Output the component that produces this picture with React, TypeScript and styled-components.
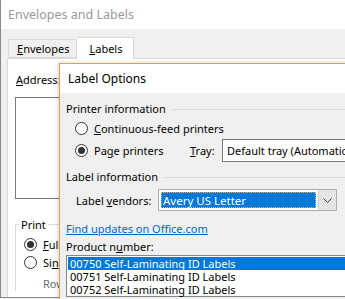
import React from "react";
import styled, { createGlobalStyle } from "styled-components";

const GlobalStyle = createGlobalStyle`
  html, body {
    margin: 0;
    padding: 0;
    background: #f0f0f0;
    overflow: hidden;
  }
  body {
    font-family: "Noto Sans", "Segoe UI", "Liberation Sans", sans-serif;
    font-size: 11px;
    color: #000;
  }
`;

const Desktop = styled.div`
  position: relative;
  width: 345px;
  height: 299px;
  overflow: hidden;
  background: #f0f0f0;
`;

const Window = styled.div`
  position: absolute;
  left: 0;
  top: 0;
  width: 420px;
  height: 298px;
  border-left: 1px solid #8a8a8a;
  border-bottom: 1px solid #8a8a8a;
  background: #f0f0f0;
  display: flex;
  flex-direction: column;
  box-sizing: border-box;
`;

const TitleBar = styled.div<{ $active?: boolean }>`
  height: 29px;
  flex: none;
  background: #fff;
  display: flex;
  align-items: center;
  padding-left: ${(p) => (p.$active ? 8 : 7)}px;
  font-size: ${(p) => (p.$active ? 12 : 12.5)}px;
  color: ${(p) => (p.$active ? "#000" : "#9a9a9a")};
`;

const TabStrip = styled.div`
  display: flex;
  align-items: flex-end;
  height: 29px;
  padding: 7px 0 0 7px;
  box-sizing: border-box;
  flex: none;
`;

const Tab = styled.div<{ $selected?: boolean }>`
  height: ${(p) => (p.$selected ? 22 : 19)}px;
  padding: 0 ${(p) => (p.$selected ? 11 : 7)}px 0 ${(p) => (p.$selected ? 12 : 8)}px;
  display: flex;
  align-items: center;
  box-sizing: border-box;
  border: 1px solid #d9d9d9;
  border-bottom: ${(p) => (p.$selected ? "none" : "1px solid #d9d9d9")};
  background: ${(p) => (p.$selected ? "#fff" : "#f0f0f0")};
  margin-bottom: ${(p) => (p.$selected ? -1 : 0)}px;
  position: relative;
  z-index: ${(p) => (p.$selected ? 1 : 0)};
  & + & {
    border-left: none;
  }
`;

const TabPanel = styled.div`
  margin-left: 6px;
  flex: 1;
  background: #fff;
  border: 1px solid #d9d9d9;
  border-bottom: none;
  padding: 13px 0 0 8px;
  display: flex;
  flex-direction: column;
`;

const FieldLabel = styled.div`
  line-height: 15px;
  white-space: nowrap;
`;

const AddressBox = styled.div`
  margin-top: 10px;
  margin-left: -1px;
  height: 100px;
  width: 300px;
  border: 1px solid #7a7a7a;
  background: #fff;
`;

const GroupBox = styled.fieldset`
  margin: 18px 0 0 -1px;
  padding: 3px 0 0 8px;
  border: 1px solid #dcdcdc;
  border-bottom: none;
  width: 300px;
  min-width: 0;
  display: flex;
  flex-direction: column;
`;

const Legend = styled.legend`
  padding: 0 2px;
  margin-left: -5px;
  line-height: 15px;
`;

const RadioRow = styled.label<{ $height?: number }>`
  display: flex;
  align-items: center;
  height: ${(p) => p.$height ?? 18}px;
  gap: 6px;
  white-space: nowrap;
`;

const RadioCircle = styled.span<{ $checked?: boolean }>`
  width: 13px;
  height: 13px;
  border: 1px solid #333;
  border-radius: 50%;
  box-sizing: border-box;
  background: #fff;
  flex: none;
  display: flex;
  align-items: center;
  justify-content: center;
  &::after {
    content: "";
    width: 7px;
    height: 7px;
    border-radius: 50%;
    background: ${(p) => (p.$checked ? "#333" : "transparent")};
  }
`;

const GrayText = styled.div`
  color: #6d6d6d;
  padding-left: 19px;
  margin-top: 5px;
  line-height: 15px;
`;

const Dialog = styled.div`
  position: absolute;
  left: 59px;
  top: 63px;
  width: 330px;
  height: 250px;
  border: 1px solid #dba25a;
  background: #f0f0f0;
  box-shadow: -1px 0 4px rgba(0, 0, 0, 0.18);
  display: flex;
  flex-direction: column;
`;

const DialogBody = styled.div`
  padding: 8px 0 0 6px;
  display: flex;
  flex-direction: column;
  overflow: hidden;
`;

const SectionHeading = styled.div<{ $top?: number }>`
  display: flex;
  align-items: center;
  gap: 6px;
  line-height: 15px;
  margin-top: ${(p) => p.$top ?? 0}px;
  white-space: nowrap;
  &::after {
    content: "";
    flex: 1;
    height: 1px;
    background: #dcdcdc;
    margin-top: 1px;
  }
`;

const Indented = styled.div`
  padding-left: 9px;
  margin-top: 1px;
  display: flex;
  flex-direction: column;
`;

const PrinterRow = styled.div`
  display: flex;
  align-items: center;
  height: 23px;
`;

const PrinterRadio = styled(RadioRow)`
  width: 115px;
  height: 23px;
`;

const TrayLabel = styled.span`
  width: 32px;
`;

const TextInput = styled.div`
  width: 160px;
  height: 23px;
  box-sizing: border-box;
  border: 1px solid #7a7a7a;
  background: #fff;
  display: flex;
  align-items: center;
  padding-left: 4px;
  white-space: nowrap;
  overflow: hidden;
  flex: none;
`;

const VendorRow = styled.div`
  display: flex;
  align-items: center;
  margin-top: 5px;
  padding-left: 10px;
  height: 22px;
`;

const VendorLabel = styled.span`
  width: 82px;
  flex: none;
`;

const Combo = styled.div`
  width: 179px;
  height: 22px;
  box-sizing: border-box;
  border: 1px solid #adadad;
  background: #e5e5e5;
  display: flex;
  flex: none;
`;

const ComboValue = styled.div`
  flex: 1;
  background: #fff;
  padding: 2px;
  display: flex;
`;

const ComboSelected = styled.div`
  flex: 1;
  background: #0078d7;
  color: #fff;
  font-size: 11.5px;
  outline: 1px dotted #f6b26b;
  outline-offset: -1px;
  display: flex;
  align-items: center;
  padding-left: 2px;
  white-space: nowrap;
`;

const ComboArrow = styled.div`
  width: 17px;
  display: flex;
  align-items: center;
  justify-content: center;
  border-left: 1px solid #cfcfcf;
  background: #e5e5e5;
`;

const Link = styled.a`
  color: #0066cc;
  text-decoration: underline;
  line-height: 15px;
  margin-top: 10px;
  white-space: nowrap;
`;

const ListLabel = styled.div`
  line-height: 15px;
  margin-top: 3px;
  white-space: nowrap;
`;

const ListBox = styled.div`
  margin-top: 1px;
  width: 300px;
  height: 42px;
  box-sizing: border-box;
  border: 1px solid #828790;
  background: #fff;
  padding: 1px;
  display: flex;
  flex-direction: column;
`;

const ListItem = styled.div<{ $selected?: boolean }>`
  height: 13px;
  line-height: 13px;
  padding-left: 2px;
  white-space: nowrap;
  background: ${(p) => (p.$selected ? "#0078d7" : "transparent")};
  color: ${(p) => (p.$selected ? "#fff" : "#000")};
`;

const products = [
  "00750 Self-Laminating ID Labels",
  "00751 Self-Laminating ID Labels",
  "00752 Self-Laminating ID Labels",
];

export default function App() {
  return (
    <>
      <GlobalStyle />
      <Desktop>
        <Window>
          <TitleBar>Envelopes and Labels</TitleBar>
          <TabStrip>
            <Tab>
              <span>
                <u>E</u>nvelopes
              </span>
            </Tab>
            <Tab $selected>
              <span>
                <u>L</u>abels
              </span>
            </Tab>
          </TabStrip>
          <TabPanel>
            <FieldLabel>
              <u>A</u>ddress:
            </FieldLabel>
            <AddressBox />
            <GroupBox>
              <Legend>Print</Legend>
              <RadioRow>
                <RadioCircle $checked />
                <span>
                  <u>F</u>ull page of the same label
                </span>
              </RadioRow>
              <RadioRow>
                <RadioCircle />
                <span>
                  Si<u>n</u>gle label
                </span>
              </RadioRow>
              <GrayText>Row:</GrayText>
            </GroupBox>
          </TabPanel>
        </Window>

        <Dialog>
          <TitleBar $active>Label Options</TitleBar>
          <DialogBody>
            <SectionHeading>Printer information</SectionHeading>
            <Indented>
              <RadioRow $height={22}>
                <RadioCircle />
                <span>
                  <u>C</u>ontinuous-feed printers
                </span>
              </RadioRow>
              <PrinterRow>
                <PrinterRadio>
                  <RadioCircle $checked />
                  <span>
                    Pa<u>g</u>e printers
                  </span>
                </PrinterRadio>
                <TrayLabel>
                  <u>T</u>ray:
                </TrayLabel>
                <TextInput>Default tray (Automatically select)</TextInput>
              </PrinterRow>
            </Indented>
            <SectionHeading $top={7}>Label information</SectionHeading>
            <VendorRow>
              <VendorLabel>
                Label <u>v</u>endors:
              </VendorLabel>
              <Combo>
                <ComboValue>
                  <ComboSelected>Avery US Letter</ComboSelected>
                </ComboValue>
                <ComboArrow>
                  <svg width="9" height="5" viewBox="0 0 9 5">
                    <path d="M0.5 0.5 L4.5 4.5 L8.5 0.5" fill="none" stroke="#333" strokeWidth="1" />
                  </svg>
                </ComboArrow>
              </Combo>
            </VendorRow>
            <Link href="#">Find updates on Office.com</Link>
            <ListLabel>
              Product n<u>u</u>mber:
            </ListLabel>
            <ListBox>
              {products.map((p, i) => (
                <ListItem key={p} $selected={i === 0}>
                  {p}
                </ListItem>
              ))}
            </ListBox>
          </DialogBody>
        </Dialog>
      </Desktop>
    </>
  );
}
